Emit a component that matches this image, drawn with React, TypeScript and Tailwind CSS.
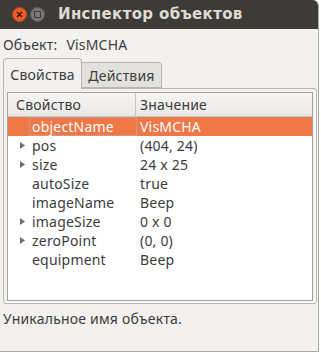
import React from 'react';

type Prop = { name: string; value: string; expandable?: boolean };

const props: Prop[] = [
  { name: 'pos', value: '(404, 24)', expandable: true },
  { name: 'size', value: '24 x 25', expandable: true },
  { name: 'autoSize', value: 'true' },
  { name: 'imageName', value: 'Beep' },
  { name: 'imageSize', value: '0 x 0', expandable: true },
  { name: 'zeroPoint', value: '(0, 0)', expandable: true },
  { name: 'equipment', value: 'Beep' },
];

const Arrow = () => (
  <svg width="7" height="9" viewBox="0 0 7 9" className="block">
    <path d="M1 1 L6 4.5 L1 8 Z" fill="#6f6f6f" />
  </svg>
);

const App: React.FC = () => {
  return (
    <div
      className="w-[321px] h-[352px] bg-white overflow-hidden text-[14px] tracking-[0.2px] text-[#3c3c3c]"
      style={{ fontFamily: '"Noto Sans", "DejaVu Sans", sans-serif' }}
    >
      <div className="w-[319px] h-[352px] flex flex-col bg-[#f2f1f0] border-r border-b border-[#a9a8a4] rounded-tr-[6px] overflow-hidden">
        {/* title bar */}
        <div className="h-[29px] shrink-0 bg-[#3c3b37] flex items-center pl-[12px]">
          <div className="w-[15px] h-[15px] rounded-full bg-[#ef5c2c] border border-[#b8451f] flex items-center justify-center">
            <svg width="7" height="7" viewBox="0 0 7 7">
              <path d="M1 1 L6 6 M6 1 L1 6" stroke="#3a1a10" strokeWidth="1.6" />
            </svg>
          </div>
          <div className="ml-[3px] w-[15px] h-[15px] rounded-full bg-[#7a7974] border border-[#5b5a56] flex items-center justify-center">
            <div className="w-[7px] h-[7px] border border-[#3c3b37]" />
          </div>
          <div
            className="ml-[13px] text-[15px] font-bold text-[#dfdbd2] tracking-[0.35px]"
            style={{ fontFamily: '"DejaVu Sans", sans-serif' }}
          >
            Инспектор объектов
          </div>
        </div>

        {/* object line */}
        <div className="h-[29px] shrink-0 flex items-center pl-[3px] pt-[2px]">
          <span>Объект:</span>
          <span className="ml-[9px]">VisMCHA</span>
        </div>

        {/* tabs */}
        <div className="pl-[3px] flex items-end h-[30px] shrink-0">
          <div className="w-[79px] h-[31px] bg-[#f2f1f0] border border-[#b8b6b2] border-b-0 rounded-t-[4px] flex items-center justify-center relative z-10 -mb-[1px] pt-[1px]">
            Свойства
          </div>
          <div className="w-[80px] h-[26px] bg-[#e3e1dd] border border-[#b8b6b2] border-l-0 rounded-tr-[4px] flex items-center justify-center">
            Действия
          </div>
        </div>

        {/* tab panel */}
        <div className="ml-[3px] mr-[1px] h-[216px] shrink-0 border border-[#b8b6b2] rounded-b-[3px] rounded-tr-[3px] p-[3px] pb-[2px] shadow-[inset_-1px_-1px_0_#fbfbfa]">
          <div className="h-full bg-white border border-[#a6a5a1] flex flex-col">
            <div className="h-[24px] shrink-0 flex bg-gradient-to-b from-[#f6f5f4] to-[#e9e8e6] border-b border-[#c4c2bd]">
              <div className="w-[128px] flex items-center pl-[8px] border-r border-[#c9c7c2]">Свойство</div>
              <div className="flex-1 flex items-center pl-[4px]">Значение</div>
            </div>
            <div className="h-[19px] shrink-0 flex bg-[#f07746] text-white">
              <div className="w-[128px] pl-[21px] flex">
                <div className="flex-1 flex items-center pl-[2px] border border-dotted border-[#a8b7c8] border-r-0">objectName</div>
              </div>
              <div className="flex-1 flex items-center pl-[4px] border-l border-dotted border-[#a8b7c8]">
                <span className="-ml-[1px]">VisMCHA</span>
              </div>
            </div>
            {props.map((p) => (
              <div key={p.name} className="h-[19px] shrink-0 flex">
                <div className="w-[128px] flex items-center">
                  <div className="w-[23px] flex justify-end pr-[5px]">{p.expandable && <Arrow />}</div>
                  <span className="pl-[1px]">{p.name}</span>
                </div>
                <div className="flex-1 flex items-center pl-[4px]">{p.value}</div>
              </div>
            ))}
          </div>
        </div>

        {/* status */}
        <div className="pl-[3px] pt-[4px]">Уникальное имя объекта.</div>
      </div>
    </div>
  );
};

export default App;
